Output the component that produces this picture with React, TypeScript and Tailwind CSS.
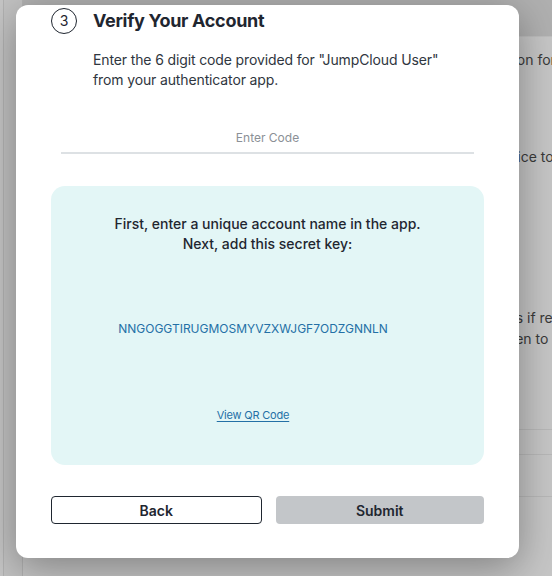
import React from "react";

export default function App() {
  return (
    <div
      className="relative w-[552px] h-[576px] overflow-hidden bg-[#c6c6c6]"
      style={{ fontFamily: "Inter, 'Noto Sans', sans-serif" }}
    >
      {/* underlying dimmed page */}
      <div className="absolute inset-0 flex">
        <div className="w-[20px] h-full border-l border-[#b2b2b2] ml-[3px] border-r bg-[#c2c2c2]" />
        <div className="flex-1 flex flex-col">
          <div className="h-[37px] bg-[#b0b0b0] border-b border-[#bdbdbd]" />
          <div className="flex-1 relative text-[14px] text-[#3a3a3a] whitespace-nowrap">
            <div className="absolute left-[478px] top-[12px]">ation for</div>
            <div className="absolute left-[470px] top-[109px]">device to</div>
            <div className="absolute left-[485px] top-[270px]">ks if re</div>
            <div className="absolute left-[479px] top-[291px]">reen to</div>
            <div className="absolute left-0 right-0 top-[392px] border-t border-[#b8b8b8]" />
            <div className="absolute left-0 right-0 top-[417px] border-t border-[#b8b8b8]" />
            <div className="absolute left-0 right-0 top-[459px] border-t border-[#b8b8b8]" />
          </div>
        </div>
      </div>

      {/* modal */}
      <div className="absolute left-[16px] top-[5px] w-[503px] h-[553px] bg-white rounded-[12px] shadow-[0_10px_40px_rgba(0,0,0,0.35)] flex flex-col px-[35px]">
        <div className="flex items-center mt-[2px] h-[27px]">
          <div className="w-[26px] h-[26px] rounded-full border border-[#1f2630] flex items-center justify-center text-[14px] text-[#1f2630]">
            3
          </div>
          <div className="ml-[16px] text-[18px] font-bold text-[#1f2630] leading-[26px] tracking-[-0.3px]">
            Verify Your Account
          </div>
        </div>

        <p className="ml-[42px] mt-[16px] text-[14px] leading-[20px] text-[#2f3640] tracking-[-0.13px]">
          Enter the 6 digit code provided for "JumpCloud User"
          <br />
          from your authenticator app.
        </p>

        <div className="mx-[10px] mt-[40px] flex flex-col items-center">
          <div className="text-[12px] leading-[16px] text-[#8b9096]">Enter Code</div>
          <div className="w-full h-[2px] bg-[#dde1e4] mt-[6px]" />
        </div>

        <div className="mt-[32px] h-[279px] rounded-[14px] bg-[#e3f6f6] flex flex-col items-center">
          <div className="mt-[28px] text-[14px] leading-[20px] font-medium text-[#1f2630] text-center">
            First, enter a unique account name in the app.
            <br />
            Next, add this secret key:
          </div>
          <div className="mr-[29px] flex flex-col items-center">
            <div className="mt-[67px] text-[12px] leading-[16px] text-[#2470a6]">
              NNGOGGTIRUGMOSMYVZXWJGF7ODZGNNLN
            </div>
            <div className="mt-[71px] text-[11px] leading-[14px] text-[#2470a6] underline underline-offset-2 tracking-[-0.2px]">
              View QR Code
            </div>
          </div>
        </div>

        <div className="mt-[31px] flex gap-[14px]">
          <button className="flex-1 h-[28px] rounded-[4px] border border-[#1f2630] bg-white text-[14px] font-semibold text-[#1f2630]">
            Back
          </button>
          <button className="flex-1 h-[28px] rounded-[4px] bg-[#c3c6c9] text-[14px] font-semibold text-[#1f2630]">
            Submit
          </button>
        </div>
      </div>
    </div>
  );
}
